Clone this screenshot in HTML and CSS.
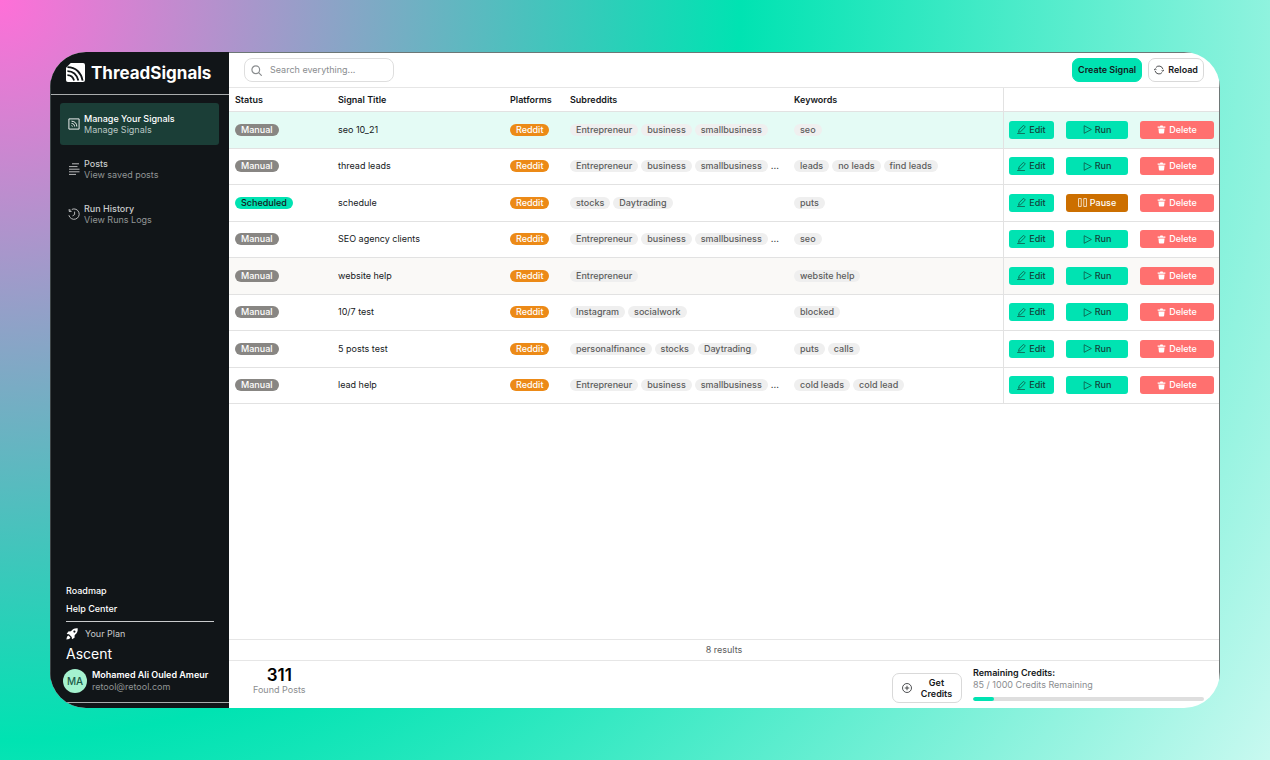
FILE: index.html
```html
<!DOCTYPE html>
<html lang="en">
<head>
<meta charset="utf-8">
<title>ThreadSignals</title>
<link rel="stylesheet" href="styles.css">
</head>
<body>
<svg class="sprite" aria-hidden="true">
  <symbol id="i-edit" viewBox="0 0 10 10"><path d="M.6 9.500h7.800M1.800 7.700l.6-2.500L6.800.9a.9.900 0 0 1 1.300 0l.6.6a.9.900 0 0 1 0 1.300L4.300 7.100z" fill="none" stroke="currentColor" stroke-width=".8" stroke-linejoin="round" stroke-linecap="round"/></symbol>
  <symbol id="i-run" viewBox="0 0 10 10"><path d="M1.300.8v8.400L9.300 5z" fill="none" stroke="currentColor" stroke-width=".8" stroke-linejoin="round"/></symbol>
  <symbol id="i-pause" viewBox="0 0 10 10"><path d="M.6.6h3v8.800h-3zM6.400.6h3v8.800h-3z" fill="none" stroke="currentColor" stroke-width=".8" stroke-linejoin="round"/></symbol>
  <symbol id="i-trash" viewBox="0 0 10 10"><path d="M.7 1.700h2.600L3.800.6h2.400l.5 1.100h2.600v1.400H.7zM1.600 3.800h6.800L7.900 8.700a.9.900 0 0 1-.9.8H3a.9.900 0 0 1-.9-.8z" fill="currentColor"/></symbol>
</svg>
<div class="app">
  <aside class="sidebar">
    <div class="brand">
      <svg class="brand-mark" viewBox="0 0 20 20"><path d="M5 0h13a2 2 0 0 1 2 2v16a2 2 0 0 1-2 2H2a2 2 0 0 1-2-2V5z" fill="#fff"/><path d="M1.500 4.300C10.500 4.300 16 10.500 17.500 18.500M1.500 8.500c6.500 0 10 4 11.500 10M1.500 12.700c3.800 0 6 2 7 5.800" fill="none" stroke="#111518" stroke-width="1.900"/></svg>
      <span class="brand-name">ThreadSignals</span>
    </div>
    <nav class="nav">
      <a class="nav-item active" href="#">
        <svg class="nav-icon" viewBox="0 0 12 12"><path d="M.9.9h10.200v10.200H.9zM3.500 3.200c3.200 0 5.300 2.100 5.300 5.300M3.500 5.400c1.900 0 3.100 1.200 3.100 3.100M3.500 7.600c.6 0 .9.300.9.900" fill="none" stroke="currentColor" stroke-width=".9"/></svg>
        <span class="nav-text"><span class="nav-title">Manage Your Signals</span><span class="nav-sub">Manage Signals</span></span>
      </a>
      <a class="nav-item" href="#">
        <svg class="nav-icon" viewBox="0 0 12 12"><path d="M4 .8h7M1 3.600h8.500M1 6.200h10.500M1 8.800h10.500M1 11.400h7" fill="none" stroke="currentColor" stroke-width=".9"/></svg>
        <span class="nav-text"><span class="nav-title">Posts</span><span class="nav-sub">View saved posts</span></span>
      </a>
      <a class="nav-item" href="#">
        <svg class="nav-icon" viewBox="0 0 12 12"><path d="M3.800 1.400A5.200 5.200 0 1 1 .9 7.200M3.600 3.400H1.200V1M1.300 3.300l1.500-1.400M6.600 3.600v3L4.500 7.900" fill="none" stroke="currentColor" stroke-width=".9"/></svg>
        <span class="nav-text"><span class="nav-title">Run History</span><span class="nav-sub">View Runs Logs</span></span>
      </a>
    </nav>
    <div class="side-foot">
      <a class="side-link" href="#">Roadmap</a>
      <a class="side-link" href="#">Help Center</a>
      <div class="plan">
        <svg class="plan-icon" viewBox="0 0 12 12"><path d="M11.700.3C8.600 0 6.600 1 5 3.300L2.300 3.500.7 6l2.300.3 2.700 2.700.3 2.300 2.500-1.600.2-2.700C11 5.400 12 3.400 11.700.3zM2.500 7.600C1.200 7.900.7 9.500.4 11.600c2.100-.3 3.700-.8 4-2.100z" fill="#fff"/><circle cx="8.400" cy="3.600" r="1.100" fill="#111518"/></svg>
        <span>Your Plan</span>
      </div>
      <div class="plan-name">Ascent</div>
      <div class="user">
        <span class="avatar">MA</span>
        <span class="nav-text"><span class="user-name">Mohamed Ali Ouled Ameur</span><span class="user-mail">retool@retool.com</span></span>
      </div>
    </div>
  </aside>
  <main class="main">
    <header class="topbar">
      <label class="search">
        <svg class="search-icon" viewBox="0 0 12 12"><circle cx="5.200" cy="5.200" r="4.200" fill="none" stroke="currentColor" stroke-width="1.300"/><path d="M8.300 8.300l3 3" stroke="currentColor" stroke-width="1.300" stroke-linecap="round"/></svg>
        <input type="text" placeholder="Search everything..." aria-label="Search everything">
      </label>
      <div class="actions">
        <button class="btn primary">Create Signal</button>
        <button class="btn outline"><svg class="btn-icon" viewBox="0 0 12 12"><path d="M2.300 3A4.800 4.800 0 0 1 10.700 5M9.700 9A4.800 4.800 0 0 1 1.300 7M.3 6.300l.9-1.800 1.700 1M11.700 5.700l-.9 1.800-1.700-1" fill="none" stroke="currentColor" stroke-width=".9"/></svg>Reload</button>
      </div>
    </header>
    <div class="table-area">
      <table class="signals">
        <colgroup><col class="c-status"><col class="c-title"><col class="c-platform"><col class="c-subs"><col class="c-keys"><col class="c-actions"></colgroup>
        <thead><tr><th>Status</th><th>Signal Title</th><th>Platforms</th><th>Subreddits</th><th>Keywords</th><th class="act" aria-label="Actions"></th></tr></thead>
        <tbody id="rows"></tbody>
      </table>
    </div>
    <div class="results">8 results</div>
    <footer class="footer">
      <div class="stat"><span class="stat-value">311</span><span class="stat-label">Found Posts</span></div>
      <div class="credits">
        <button class="btn outline get"><svg class="btn-icon" viewBox="0 0 12 12"><circle cx="6" cy="6" r="5.400" fill="none" stroke="currentColor" stroke-width=".9"/><path d="M6 3.300v5.400M3.300 6h5.400" stroke="currentColor" stroke-width=".9"/></svg><span>Get<br>Credits</span></button>
        <div class="quota">
          <div class="quota-title">Remaining Credits:</div>
          <div class="quota-text">85 / 1000 Credits Remaining</div>
          <div class="bar"><div class="bar-fill" style="width:9%"></div></div>
        </div>
      </div>
    </footer>
  </main>
</div>
<script src="app.js"></script>
</body>
</html>
```

FILE: styles.css
```css
* { box-sizing: border-box; }
body {
  margin: 0;
  min-height: 100vh;
  padding: 52px 50px;
  display: flex;
  font-family: Inter, "Liberation Sans", sans-serif;
  font-size: 9px;
  line-height: 12px;
  color: #15181b;
  background: radial-gradient(circle at 0 0, #ff6fd8 0%, #00e3b2 50%, #c8f9f0 100%);
}
button, input { font: inherit; color: inherit; }
a { color: inherit; text-decoration: none; }
svg { flex: none; }
.sprite { position: absolute; width: 0; height: 0; }

.app {
  flex: 1;
  display: flex;
  border-radius: 36px;
  overflow: hidden;
  background: #fff;
}

.sidebar {
  width: 179px;
  flex: none;
  display: flex;
  flex-direction: column;
  background: #111518;
  color: #fff;
  padding-bottom: 5px;
  border-left: 1px solid #3d4446;
}
.brand {
  display: flex;
  align-items: center;
  gap: 6px;
  height: 43px;
  padding: 0 14px 1px 15px;
  border-bottom: 1px solid #a9acad;
}
.brand-mark { width: 19px; height: 19px; }
.brand-name { font-size: 17px; line-height: 24px; font-weight: 700; }

.nav { display: flex; flex-direction: column; gap: 3px; padding: 8px 10px 8px 9px; }
.nav-item {
  display: flex;
  align-items: center;
  gap: 4px;
  height: 42px;
  padding: 0 8px;
  border-radius: 3px;
  color: #c9cbcc;
}
.nav-item.active { background: #1b3e37; color: #fff; }
.nav-icon { width: 12px; height: 12px; }
.nav-text { display: flex; flex-direction: column; line-height: 11px; }
.nav-title { font-weight: 500; }
.nav-sub { color: #929596; }
.active .nav-sub { color: #b9c6c3; }

.side-foot {
  margin-top: auto;
  display: flex;
  flex-direction: column;
  border-bottom: 1px solid #a9acad;
  padding: 0 15px 9px;
}
.side-link { height: 18px; font-weight: 500; }
.plan {
  display: flex;
  align-items: center;
  gap: 7px;
  height: 24px;
  border-top: 1px solid #c9cbcc;
  color: #c9cbcc;
}
.plan-icon { width: 12px; height: 12px; }
.plan-name { font-size: 14px; line-height: 18px; }
.user { display: flex; align-items: center; gap: 5px; margin: 6px -8px 0 -3px; white-space: nowrap; }
.user-name { font-weight: 600; line-height: 12px; }
.user-mail { color: #929596; line-height: 12px; }
.avatar {
  width: 24px;
  height: 24px;
  border-radius: 50%;
  background: #a5f2cf;
  color: #1b5a47;
  font-size: 10px;
  line-height: 24px;
  font-weight: 500;
  text-align: center;
}

.main {
  flex: 1;
  min-width: 0;
  display: flex;
  flex-direction: column;
  border-top: 1px solid #6d7776;
  border-right: 1px solid #6d7776;
}
.topbar {
  display: flex;
  align-items: center;
  justify-content: space-between;
  height: 35px;
  padding: 0 15px;
  border-bottom: 1px solid #e6e6e6;
}
.search {
  display: flex;
  align-items: center;
  gap: 8px;
  width: 150px;
  height: 24px;
  padding: 0 6px;
  border: 1px solid #dedede;
  border-radius: 8px;
  color: #8a8d8f;
}
.search-icon { width: 11px; height: 11px; }
.search input { flex: 1; min-width: 0; border: 0; padding: 0; outline: 0; background: none; }
.search input::placeholder { color: #8a8d8f; opacity: 1; }
.actions { display: flex; gap: 6px; }
.btn {
  display: flex;
  align-items: center;
  justify-content: center;
  gap: 4px;
  height: 24px;
  padding: 0 5px;
  border: 1px solid #00e3b2;
  border-radius: 7px;
  font-weight: 600;
  white-space: nowrap;
}
.primary { background: #00e3b2; }
.outline { background: #fff; border-color: #d9d9d9; }
.btn-icon { width: 10px; height: 10px; }

.table-area { flex: 1; }
.signals { width: 100%; height: 316px; table-layout: fixed; border-collapse: separate; border-spacing: 0; }
.c-status { width: 103px; }
.c-title { width: 172px; }
.c-platform { width: 60px; }
.c-subs { width: 224px; }
.c-actions { width: 216px; }
.signals th, .signals td {
  padding: 0 6px;
  text-align: left;
  white-space: nowrap;
  border-bottom: 1px solid #e2e2e2;
}
.signals th { height: 24px; font-weight: 600; }
.signals .act { border-left: 1px solid #e2e2e2; padding: 0 5px; }
.selected td { background: #e4fbf5; }
.hovered td { background: #faf9f7; }
.tags { display: flex; gap: 3px; align-items: center; font-weight: 500; }
.tag { height: 12px; padding: 0 6px; border-radius: 6px; background: #efefef; color: #5c5c5c; }
.tag.manual { background: #888683; color: #fff; }
.tag.scheduled { background: #00e3b2; color: #15181b; }
.tag.reddit { background: #ec8a17; color: #fff; }
.row-actions { display: grid; grid-template-columns: 45px 62px 74px; gap: 12px; }
.row-btn {
  display: flex;
  align-items: center;
  justify-content: center;
  gap: 3px;
  height: 18px;
  padding: 0;
  border: 0;
  border-radius: 3px;
  background: #00e3b2;
  color: #12453a;
  font-weight: 500;
}
.row-btn svg { width: 9px; height: 9px; }
.row-btn.pause { background: #cc6f00; color: #fff; }
.row-btn.delete { background: #ff706f; color: #fff; }

.results {
  height: 22px;
  line-height: 20px;
  text-align: center;
  color: #5c5c5c;
  border-top: 1px solid #e6e6e6;
  border-bottom: 1px solid #e6e6e6;
}
.footer { display: flex; justify-content: space-between; height: 47px; padding: 5px 15px 5px 24px; }
.stat { display: flex; flex-direction: column; align-items: center; }
.stat-value { font-size: 17px; line-height: 18px; font-weight: 600; color: #000; }
.stat-label { color: #8a8d8f; }
.credits { display: flex; gap: 11px; }
.get { width: 70px; height: 30px; margin-top: 7px; gap: 9px; line-height: 11px; }
.quota { width: 231px; padding-top: 1px; }
.quota-title { font-weight: 600; }
.quota-text { color: #8a8d8f; }
.bar { height: 4px; margin-top: 6px; border-radius: 2px; background: #dedede; overflow: hidden; }
.bar-fill { height: 4px; border-radius: 2px; background: #00e3b2; }
```

FILE: app.js
```js
const biz = ["Entrepreneur", "business", "smallbusiness"];
const signals = [
  { title: "seo 10_21", subs: biz, keys: ["seo"], state: "selected" },
  { title: "thread leads", subs: biz, more: true, keys: ["leads", "no leads", "find leads"] },
  { title: "schedule", subs: ["stocks", "Daytrading"], keys: ["puts"], scheduled: true },
  { title: "SEO agency clients", subs: biz, more: true, keys: ["seo"] },
  { title: "website help", subs: ["Entrepreneur"], keys: ["website help"], state: "hovered" },
  { title: "10/7 test", subs: ["Instagram", "socialwork"], keys: ["blocked"] },
  { title: "5 posts test", subs: ["personalfinance", "stocks", "Daytrading"], keys: ["puts", "calls"] },
  { title: "lead help", subs: biz, more: true, keys: ["cold leads", "cold lead"] }
];
const tags = (list, cls = "", more = false) =>
  `<div class="tags">${list.map(t => `<span class="tag ${cls}">${t}</span>`).join("")}${more ? "<span>...</span>" : ""}</div>`;
const button = (icon, label, cls = "") =>
  `<button class="row-btn ${cls}"><svg><use href="#i-${icon}"/></svg>${label}</button>`;

document.getElementById("rows").innerHTML = signals.map(s => `
  <tr class="${s.state || ""}">
    <td>${s.scheduled ? tags(["Scheduled"], "scheduled") : tags(["Manual"], "manual")}</td>
    <td>${s.title}</td>
    <td>${tags(["Reddit"], "reddit")}</td>
    <td>${tags(s.subs, "", s.more)}</td>
    <td>${tags(s.keys)}</td>
    <td class="act"><div class="row-actions">${button("edit", "Edit")}${s.scheduled ? button("pause", "Pause", "pause") : button("run", "Run")}${button("trash", "Delete", "delete")}</div></td>
  </tr>`).join("");
```
